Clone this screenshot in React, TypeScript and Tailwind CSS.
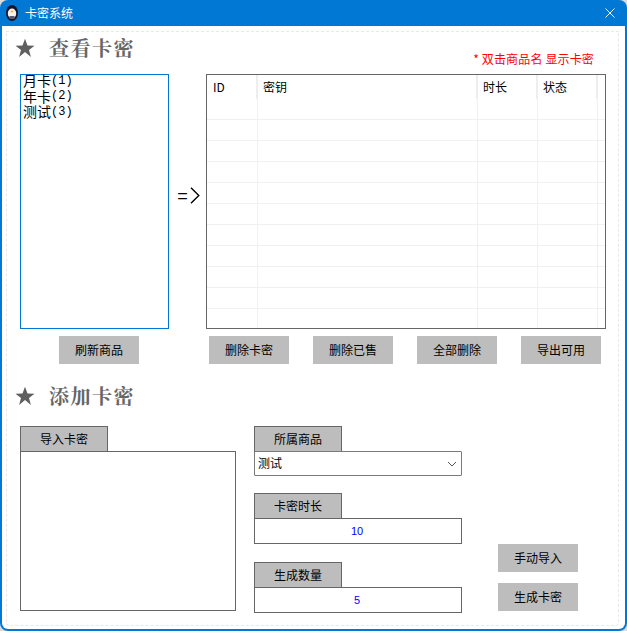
function Star() {
  return (
    <svg width="20" height="20" viewBox="0 0 20 20" className="shrink-0">
      <path d="M10 0.8l2.5 6.6 7 .3-5.5 4.4 1.9 6.9L10 14.1l-5.9 4.9 1.9-6.9L.5 7.7l7-.3z" fill="#5f5f5f" />
    </svg>
  );
}

function Heading({ text }: { text: string }) {
  return (
    <div className="flex items-center gap-[14px] h-[24px]">
      <Star />
      <span className="text-[20px] font-bold text-[#666666] tracking-[1.5px] leading-[24px] font-['Noto_Serif_CJK_SC','Noto_Sans_CJK_SC',serif]">
        {text}
      </span>
    </div>
  );
}

function GrayButton({ label }: { label: string }) {
  return (
    <button className="w-[80px] h-[28px] bg-[#bdbdbd] text-[12px] text-black flex items-center justify-center">
      {label}
    </button>
  );
}

function Tab({ label }: { label: string }) {
  return (
    <div className="w-[88px] h-[26px] -mb-px bg-[#bdbdbd] border border-[#666666] text-[12px] text-black flex items-center justify-center">
      {label}
    </div>
  );
}

function NumberField({ label, value }: { label: string; value: string }) {
  return (
    <div className="flex flex-col">
      <Tab label={label} />
      <div className="h-[26px] border border-[#666666] bg-white flex items-center justify-center pr-[2px] text-[11px] text-[#0000ff] font-['Liberation_Sans',sans-serif]">
        {value}
      </div>
    </div>
  );
}

function ListItem({ name, count }: { name: string; count: number }) {
  return (
    <div className="h-[15.5px] flex items-center whitespace-nowrap">
      {name}
      <span className="text-[12px] font-['Liberation_Mono',monospace]">({count})</span>
    </div>
  );
}

const columns = [
  { label: "ID", width: "w-[51px]", pad: "pl-[6px]" },
  { label: "密钥", width: "w-[220px]", pad: "pl-[5px]" },
  { label: "时长", width: "w-[60px]", pad: "pl-[5px]" },
  { label: "状态", width: "w-[60px]", pad: "pl-[5px]" },
];

export default function App() {
  return (
    <div className="w-[627px] h-[631px] bg-[#dcdcdc]">
      <div className="w-full h-full bg-[#0078d4] rounded-[8px] overflow-hidden flex flex-col font-['Noto_Sans_CJK_SC','Liberation_Sans',sans-serif]">
        <div className="h-[26px] shrink-0 flex items-center pl-[6px] pr-[12px] text-white">
          <svg width="12" height="16" viewBox="0 0 12 16" className="shrink-0">
            <ellipse cx="6" cy="8" rx="6" ry="8" fill="#14142a" />
            <ellipse cx="6" cy="8.5" rx="4.2" ry="5" fill="#f6f2ea" />
            <path d="M4.2 5.8h3.6L6 7.8z" fill="#e9a42c" />
            <rect x="3.5" y="11" width="5" height="3" fill="#5a5a6a" />
          </svg>
          <span className="ml-[7px] text-[12px]">卡密系统</span>
          <svg width="10" height="10" viewBox="0 0 10 10" className="ml-auto">
            <path d="M.5.5l9 9M9.5.5l-9 9" stroke="#ffffff" strokeWidth="1" />
          </svg>
        </div>

        <div className="flex-1 mx-[2px] mb-[2px] bg-white rounded-b-[6px] pt-[5px] pl-[4px] pr-[6px] pb-[3px] flex">
          <div className="flex-1 border border-dashed border-[#e8e8e8] rounded-b-[4px] pl-[8px] pr-[10px] pt-[4px] flex flex-col">
            <div className="flex items-start justify-between">
              <Heading text="查看卡密" />
              <span className="text-[12px] leading-[16px] tracking-[0.15px] text-[#ff0000] mt-[15px] mr-[14px]">
                * 双击商品名 显示卡密
              </span>
            </div>

            <div className="flex mt-[7px] ml-[5px]">
              <div className="w-[149px] h-[255px] border border-[#0078d7] pl-[2px] text-[14px] text-black">
                <div className="-mt-[2px]">
                  <ListItem name="月卡" count={1} />
                  <ListItem name="年卡" count={2} />
                  <ListItem name="测试" count={3} />
                </div>
              </div>
              <div className="w-[37px] pb-[12px] pl-[2px] flex items-center justify-center">
                <span className="flex items-center gap-[2px] text-[18px] leading-[18px] text-black font-['Liberation_Sans',sans-serif]">
                  =
                  <svg width="10" height="17" viewBox="0 0 10 17">
                    <path d="M1 .8l7.8 7.7L1 16.2" fill="none" stroke="#000000" strokeWidth="1.4" />
                  </svg>
                </span>
              </div>
              <div className="w-[400px] h-[255px] border border-[#666666] overflow-hidden">
                <div className="flex h-[24px]">
                  {columns.map((c) => (
                    <div key={c.label} className={`${c.width} ${c.pad} border-r-2 border-[#eeeeee] text-[12px] leading-[24px] text-black`}>
                      {c.label}
                    </div>
                  ))}
                </div>
                {Array.from({ length: 11 }).map((_, row) => (
                  <div key={row} className="flex h-[21px] border-b border-[#f0f0f0]">
                    {columns.map((c) => (
                      <div key={c.label} className={`${c.width} border-r border-[#f0f0f0]`} />
                    ))}
                  </div>
                ))}
              </div>
            </div>

            <div className="flex mt-[7px] ml-[5px]">
              <div className="w-[189px] pl-[39px]">
                <GrayButton label="刷新商品" />
              </div>
              <div className="flex gap-[24px]">
                <GrayButton label="删除卡密" />
                <GrayButton label="删除已售" />
                <GrayButton label="全部删除" />
                <GrayButton label="导出可用" />
              </div>
            </div>

            <div className="mt-[20px]">
              <Heading text="添加卡密" />
            </div>

            <div className="flex mt-[18px] ml-[5px]">
              <div className="w-[216px] flex flex-col">
                <Tab label="导入卡密" />
                <div className="h-[160px] border border-[#666666] bg-white" />
              </div>
              <div className="w-[208px] ml-[18px] flex flex-col">
                <div className="flex flex-col">
                  <Tab label="所属商品" />
                  <div className="h-[25px] border border-[#7a7a7a] bg-white rounded-[1px] flex items-center justify-between pl-[3px] pr-[4px] text-[12px] text-black">
                    <span className="-mt-px">测试</span>
                    <svg width="10" height="6" viewBox="0 0 10 6">
                      <path d="M1 1l4 4 4-4" fill="none" stroke="#555555" strokeWidth="1" />
                    </svg>
                  </div>
                </div>
                <div className="mt-[17px]">
                  <NumberField label="卡密时长" value="10" />
                </div>
                <div className="mt-[18px]">
                  <NumberField label="生成数量" value="5" />
                </div>
              </div>
              <div className="ml-[36px] mt-[118px] flex flex-col gap-[11px]">
                <GrayButton label="手动导入" />
                <GrayButton label="生成卡密" />
              </div>
            </div>
          </div>
        </div>
      </div>
    </div>
  );
}
